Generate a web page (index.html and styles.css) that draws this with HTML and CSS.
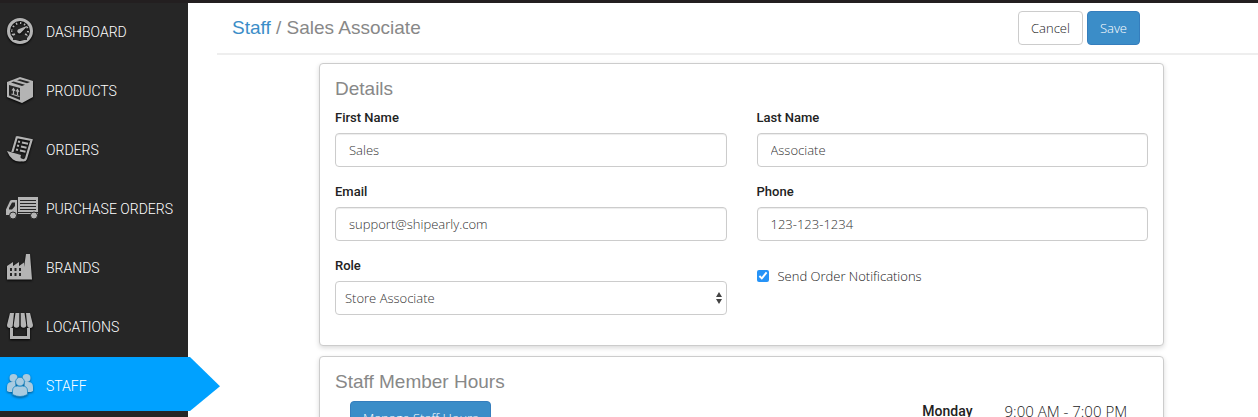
FILE: index.html
```html
<!DOCTYPE html>
<html lang="en">
<head>
<meta charset="utf-8">
<meta name="viewport" content="width=device-width, initial-scale=1">
<title>Staff / Sales Associate</title>
<link rel="stylesheet" href="styles.css">
</head>
<body>
<div class="topbar"></div>
<div class="wrapper">

<nav class="sidebar">
	<a href="#">
		<svg class="icon" viewBox="0 0 26 26">
			<circle cx="13" cy="13" r="11.5" fill="none" stroke="currentColor" stroke-width="3"/>
			<circle cx="13" cy="13" r="8" fill="none" stroke="currentColor" stroke-width="2" stroke-dasharray="1.4 2.8" pathLength="50.4"/>
			<path d="M6 17h14v5H6z" fill="#262626"/>
			<path d="M6 17l2-1M18 16l2 1" stroke="currentColor" stroke-width="1.5"/>
			<path d="M21 7.500l-6.600 6.800a2.200 2.200 0 1 1-2.400-3.200z" fill="currentColor"/>
		</svg>
		<span>DASHBOARD</span>
	</a>
	<a href="#">
		<svg class="icon" viewBox="0 0 26 26">
			<path d="M0 5L13 0l13 4v16l-11 6-15-6z" fill="currentColor"/>
			<path d="M2 8l11 3v12L2 18.500zM4 5.500l2.500-1L18 7.800l-3 1.300zM10 3.300l3-1.100 10 2.800-3 1.300z" fill="#262626"/>
			<path d="M6.500 17v-5M10.500 18v-5M5 13.500l1.500-2 1.500 2.500M9 14.500l1.500-2 1.500 2.500M4.500 17l8 2.500" fill="none" stroke="currentColor" stroke-width="1.200"/>
		</svg>
		<span>PRODUCTS</span>
	</a>
	<a href="#">
		<svg class="icon" viewBox="0 0 26 26">
			<path d="M10 1.200l14.500 2.800-5.500 18.500q-.8 2-3 1.800L13 23" fill="none" stroke="currentColor" stroke-width="2.200"/>
			<path d="M9 0l2 1-4.500 15h-2.200zM0 15l14 4q-1.500 4 2 6-6 1.500-10-1.500T0 15z" fill="currentColor"/>
			<path d="M11 5.500l2 .5M15 6.500l6 1.200M10 9.500l2 .5M14 10.500l5.500 1.200M9 13.500l2 .5M13 14.500l5.500 1.200" stroke="currentColor" stroke-width="2"/>
		</svg>
		<span>ORDERS</span>
	</a>
	<a href="#">
		<svg class="icon icon-wide" viewBox="0 0 32 22">
			<path d="M12 0h20v17H12zM0 18v-5.500L4 4q.5-1 2-1h5v15z" fill="currentColor"/>
			<path d="M14 3h16v1H14zM14 6h16v1H14zM14 9h16v1H14zM14 12h16v1H14zM3 11l3-5.500h3V9l-3 3.500H3z" fill="#262626"/>
			<path d="M11 15.500h21" stroke="#262626"/>
			<g fill="currentColor" stroke="#262626" stroke-width="1"><circle cx="7" cy="18.500" r="3.500"/><circle cx="28" cy="18.500" r="3.500"/></g>
		</svg>
		<span>PURCHASE ORDERS</span>
	</a>
	<a href="#">
		<svg class="icon" viewBox="0 0 26 26">
			<path d="M0 25.500V12l6-4v4l6-4v4l5-3.500V13l2-13h4l2 25.500z" fill="currentColor"/>
			<path d="M3 14h2v3H3zM7.500 14h2v3h-2zM12 14h2v3h-2zM3 19h2v3H3zM7.500 19h2v3h-2zM12 19h2v3h-2z" fill="#262626"/>
		</svg>
		<span>BRANDS</span>
	</a>
	<a href="#">
		<svg class="icon" viewBox="0 0 26 26">
			<path d="M3 0h4L5.800 12a2.900 2.900 0 0 1-5.800 0zM8.500 0h3.800v12a2.800 2.800 0 0 1-5.600 0zM13.700 0h3.800l1.800 12a2.800 2.800 0 0 1-5.600 0zM19 0h4l3 12a2.900 2.900 0 0 1-5.800 0z" fill="currentColor"/>
			<path d="M4.500 15v9.500h17V15" fill="none" stroke="currentColor" stroke-width="3"/>
		</svg>
		<span>LOCATIONS</span>
	</a>
	<a href="#" class="active">
		<svg class="icon" viewBox="0 0 26 26">
			<g fill="currentColor">
				<circle cx="6.500" cy="6" r="4"/><circle cx="19.500" cy="6" r="4"/>
				<path d="M0 19v-4q0-5 5-5h3.500v10H2zM26 19v-4q0-5-5-5h-3.500v10H24z"/>
			</g>
			<g fill="currentColor" stroke="#1787c4" stroke-width=".8">
				<path d="M5.500 22.500V19q0-5 5-5h5q5 0 5 5v3.500q-7.500 4-15 0z"/>
				<circle cx="13" cy="9.700" r="4.400"/>
			</g>
		</svg>
		<span>STAFF</span>
	</a>
</nav>

<main class="content">
	<header class="page-header">
		<h1><a href="#">Staff</a> / Sales Associate</h1>
		<div class="actions">
			<button type="button" class="btn">Cancel</button>
			<button type="submit" form="staff" class="btn btn-primary">Save</button>
		</div>
	</header>

	<div class="panels">
		<form id="staff" class="panel">
			<h2>Details</h2>
			<div class="row">
				<div class="form-group">
					<label for="first_name">First Name</label>
					<input type="text" id="first_name" class="form-control" value="Sales">
				</div>
				<div class="form-group">
					<label for="last_name">Last Name</label>
					<input type="text" id="last_name" class="form-control" value="Associate">
				</div>
				<div class="form-group">
					<label for="email">Email</label>
					<input type="email" id="email" class="form-control" value="support@shipearly.com">
				</div>
				<div class="form-group">
					<label for="phone">Phone</label>
					<input type="tel" id="phone" class="form-control" value="123-123-1234">
				</div>
				<div class="form-group">
					<label for="role">Role</label>
					<div class="select">
						<select id="role" class="form-control">
							<option>Store Associate</option>
						</select>
						<svg class="arrows" viewBox="0 0 6 12"><path d="M3 0l3 5H0zM3 12l3-5H0z" fill="#444"/></svg>
					</div>
				</div>
				<div class="checkbox">
					<input type="checkbox" id="notify" checked>
					<label for="notify">Send Order Notifications</label>
				</div>
			</div>
		</form>

		<section class="panel">
			<h2>Staff Member Hours</h2>
			<div class="row">
				<div class="manage">
					<button type="button" class="btn btn-primary">Manage Staff Hours</button>
				</div>
				<dl class="hours">
					<dt>Monday</dt>
					<dd>9:00 AM - 7:00 PM</dd>
				</dl>
			</div>
		</section>
	</div>
</main>

</div>
</body>
</html>
```
FILE: styles.css
```css
* { box-sizing: border-box; }
html { overflow: hidden; }
body { margin: 0; background: #fff; color: #222; font: 300 13px/20px "Open Sans", sans-serif; }
a { text-decoration: none; }

.topbar { height: 3px; background: #231f20; }
.wrapper { display: flex; min-height: calc(100vh - 3px); }

/* sidebar */
.sidebar { flex: none; width: 188px; background: #262626; font-family: Roboto, sans-serif; }
.sidebar a { display: flex; align-items: center; height: 54px; margin-bottom: 5px; padding: 2px 0 0 7px; color: #fff; font-size: 14px; white-space: nowrap; }
.sidebar span { padding-top: 2px; }
.sidebar .icon { flex: none; width: 26px; height: 26px; margin-right: 13px; color: #b4b4b4; filter: drop-shadow(0 1px 1px #000); }
.sidebar .icon-wide { width: 32px; height: 22px; margin: 0 8px 0 -1px; filter: none; }
.sidebar .active { width: 220px; background: #00a1ff; clip-path: polygon(0 0, 190px 0, 100% 54%, 190px 100%, 0 100%); }
.sidebar .active .icon { color: #a9cbe0; filter: drop-shadow(0 1px 1px #05598c); }

/* page header */
.content { flex: 1; min-width: 0; }
.page-header { display: flex; justify-content: space-between; align-items: center; height: 52px; margin-left: 29px; padding: 0 118px 0 15px; border-bottom: 2px solid #eee; }
h1, h2 { margin: 0; color: #888; font: 500 19px/20px "Liberation Sans", Arial, sans-serif; }
h1 a { color: #3b8dc8; }
.actions { display: flex; gap: 4px; }

.btn { height: 34px; padding: 0 12px; border: 1px solid #ccc; border-radius: 4px; background: #fff; color: #222; font: inherit; }
.btn-primary { border-color: #357ebd; background: #3b8dc8; color: #fff; }

/* panels */
.panels { padding: 8px 94px 0 131px; }
.panel { margin-bottom: 10px; padding: 15px; border: 1px solid #ccc; border-radius: 4px; background: #fff; box-shadow: 0 2px 5px rgba(0, 0, 0, .15); }
.panel h2 { margin-bottom: 9px; }
.row { display: grid; grid-template-columns: 1fr 1fr; column-gap: 30px; }

.form-group { margin-bottom: 15px; }
.form-group label, .hours dt { font-family: Roboto, sans-serif; font-weight: 500; }
.form-group label { display: block; margin-bottom: 5px; }
.form-control { display: block; width: 100%; height: 34px; padding: 0 13px; border: 1px solid #ccc; border-radius: 4px; background: #fff; box-shadow: inset 0 1px 1px rgba(0, 0, 0, .075); color: #333; font: inherit; }
.select { position: relative; }
.select select { padding: 0 9px; appearance: none; box-shadow: none; }
.arrows { position: absolute; top: 11px; right: 5px; width: 6px; height: 12px; pointer-events: none; }
.checkbox { display: flex; align-items: center; height: 20px; margin-top: 10px; }
.checkbox input { width: 12px; height: 12px; margin: 0 9px 0 0; accent-color: #2693f7; }

.manage { padding-left: 15px; }
.hours { display: grid; grid-template-columns: 216px 1fr; column-gap: 32px; margin: 0; }
.hours dt { font-size: 14px; text-align: right; }
.hours dd { margin: 0; font-size: 15px; }
```
